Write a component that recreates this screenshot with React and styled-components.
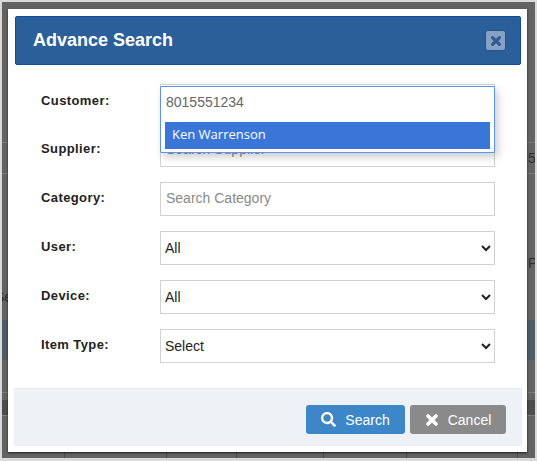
import React from 'react'
import styled, { createGlobalStyle } from 'styled-components'
import { FaSearch } from 'react-icons/fa'

const GlobalStyle = createGlobalStyle`
  html, body {
    margin: 0;
    padding: 0;
    background: #d9d9d9;
    font-family: "Liberation Sans", Arial, sans-serif;
  }
`

const Screen = styled.div`
  width: 537px;
  height: 461px;
  padding: 2px 2px 3px 2px;
  box-sizing: border-box;
  overflow: hidden;
`

const Backdrop = styled.div`
  position: relative;
  height: 100%;
  padding: 7px 8px 0 6px;
  box-sizing: border-box;
  background: #636363;
  overflow: hidden;
`

// bits of the page behind the overlay that show at the edges
const Band = styled.div`
  position: absolute;
  left: 0;
  right: 0;
  top: 318px;
  height: 40px;
  background: #4f5c68;
`

const RowLine = styled.div`
  position: absolute;
  left: 0;
  right: 0;
  top: ${p => p.$top}px;
  height: ${p => p.$height || 1}px;
  background: ${p => p.$color || '#7c7c7c'};
`

const ColLine = styled.div`
  position: absolute;
  top: 448px;
  left: ${p => p.$left}px;
  width: 1px;
  height: 10px;
  background: #4a4a4a;
`

const Stray = styled.span`
  position: absolute;
  top: ${p => p.$top}px;
  left: ${p => p.$left}px;
  font-size: 14px;
  color: #2e2e2e;
`

const Modal = styled.div`
  position: relative;
  width: 519px;
  height: 443px;
  padding: 7px 5px 6px 6px;
  box-sizing: border-box;
  display: flex;
  flex-direction: column;
  background: #fff;
  box-shadow: 0 1px 2px rgba(0, 0, 0, 0.7);
`

const Header = styled.div`
  height: 49px;
  margin: 0 1px;
  padding: 0 14px 0 17px;
  box-sizing: border-box;
  display: flex;
  align-items: center;
  justify-content: space-between;
  background: #2a5f9a;
  border: 1px solid #0f4c9c;
  border-radius: 2px;
`

const Title = styled.h4`
  margin: 0;
  color: #fff;
  font-size: 18px;
  font-weight: 700;
`

const CloseButton = styled.button`
  width: 21px;
  height: 21px;
  padding: 0;
  display: flex;
  align-items: center;
  justify-content: center;
  background: #84a2c8;
  border: 1px solid #1f5596;
  border-radius: 3px;
  color: #34598a;
`

const Form = styled.div`
  flex: 1;
  padding: 19px 27px 0;
  display: flex;
  flex-direction: column;
  gap: 15px;
`

const Row = styled.div`
  position: relative;
  display: grid;
  grid-template-columns: 119px 335px;
  align-items: center;
  height: 34px;
`

const Label = styled.label`
  padding-bottom: ${p => (p.$first ? 2 : 4)}px;
  font-size: 13px;
  font-weight: 700;
  letter-spacing: 0.4px;
  color: #222;
`

const Input = styled.input`
  width: 100%;
  height: 34px;
  padding: 0 5px 2px;
  box-sizing: border-box;
  background: #fff;
  border: 1px solid #d2d2d2;
  border-radius: 0;
  outline: none;
  font-family: inherit;
  font-size: 14px;
  color: #555;

  &::placeholder {
    color: #8a8a8a;
    opacity: 1;
  }
`

const Select = styled.select`
  width: 100%;
  height: 34px;
  box-sizing: border-box;
  background: #fff;
  border: 1px solid #d2d2d2;
  border-radius: 0;
  font-family: inherit;
  font-size: 14px;
  color: #222;
`

const Suggest = styled.div`
  position: absolute;
  top: 2px;
  left: 119px;
  z-index: 2;
  width: 335px;
  height: 67px;
  box-sizing: border-box;
  padding: 0 4px;
  background: #fff;
  border: 1px solid #5b94ee;
  border-radius: 1px;
  box-shadow: 3px 4px 8px rgba(0, 0, 0, 0.2);
`

const SuggestValue = styled.div`
  height: 35px;
  padding-left: 1px;
  line-height: 30px;
  font-size: 14px;
  color: #666;
`

const SuggestItem = styled.div`
  height: 27px;
  padding-left: 7px;
  line-height: 24px;
  background: #3a76d8;
  color: #fff;
  font-family: "Open Sans", sans-serif;
  font-size: 13px;
`

const Footer = styled.div`
  height: 58px;
  padding: 16px 16px 0;
  box-sizing: border-box;
  display: flex;
  justify-content: flex-end;
  gap: 5px;
  background: #eef2f7;
  border-top: 1px solid #e4e8ec;
`

const Button = styled.button`
  width: ${p => p.$width}px;
  height: 29px;
  padding: 0;
  display: flex;
  align-items: center;
  justify-content: center;
  gap: 9px;
  background: ${p => p.$color};
  border: none;
  border-radius: 3px;
  color: #fff;
  font-family: inherit;
  font-size: 14px;

  svg:first-child {
    font-size: 15px;
  }
`

// the heavy rounded cross of the old icon font
function Cross({ size }) {
  return (
    <svg width={size} height={size} viewBox="0 0 14 14" fill="none" stroke="currentColor" strokeWidth="3.7" strokeLinecap="round">
      <path d="M3 3L11 11M11 3L3 11" />
    </svg>
  )
}

const fields = [
  { label: 'Supplier:', placeholder: 'Search Supplier' },
  { label: 'Category:', placeholder: 'Search Category' },
  { label: 'User:', value: 'All' },
  { label: 'Device:', value: 'All' },
  { label: 'Item Type:', value: 'Select' },
]

export default function App() {
  return (
    <Screen>
      <GlobalStyle />
      <Backdrop>
        <Band />
        <RowLine $top={140} />
        <RowLine $top={171} />
        <RowLine $top={390} />
        <RowLine $top={398} $height={15} $color="#4d4d4d" />
        <RowLine $top={413} />
        <ColLine $left={62} />
        <ColLine $left={164} />
        <ColLine $left={234} />
        <ColLine $left={321} />
        <ColLine $left={404} />
        <ColLine $left={515} />
        <Stray $top={287} $left={-7}>Se</Stray>
        <Stray $top={148} $left={526}>5</Stray>
        <Stray $top={253} $left={526}>P</Stray>

        <Modal>
          <Header>
            <Title>Advance Search</Title>
            <CloseButton><Cross size={12} /></CloseButton>
          </Header>

          <Form>
            <Row>
              <Label $first>Customer:</Label>
              <Input />
              <Suggest>
                <SuggestValue>8015551234</SuggestValue>
                <SuggestItem>Ken Warrenson</SuggestItem>
              </Suggest>
            </Row>
            {fields.map(f => (
              <Row key={f.label}>
                <Label>{f.label}</Label>
                {f.placeholder ? (
                  <Input placeholder={f.placeholder} />
                ) : (
                  <Select defaultValue={f.value}>
                    <option>{f.value}</option>
                  </Select>
                )}
              </Row>
            ))}
          </Form>

          <Footer>
            <Button $width={99} $color="#3d87c9"><FaSearch />Search</Button>
            <Button $width={96} $color="#8a8a8a"><Cross size={14} />Cancel</Button>
          </Footer>
        </Modal>
      </Backdrop>
    </Screen>
  )
}
